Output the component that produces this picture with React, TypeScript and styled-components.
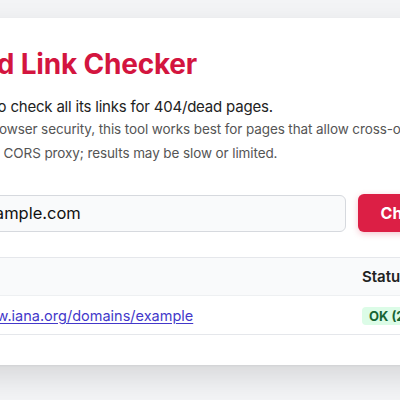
import styled, { createGlobalStyle } from 'styled-components';

const GlobalStyle = createGlobalStyle`
  html, body {
    margin: 0;
    padding: 0;
    background: #f3f4f6;
    font-family: Inter, "Noto Sans", "Liberation Sans", sans-serif;
  }
`;

const Page = styled.div`
  height: 400px;
  overflow: hidden;
  padding-top: 18px;
  box-sizing: border-box;
`;

const Card = styled.div`
  margin-left: -124px;
  width: 900px;
  background: #ffffff;
  border-radius: 12px;
  box-shadow: 0 12px 30px rgba(0, 0, 0, 0.12), 0 1px 3px rgba(0, 0, 0, 0.05);
  padding: 30px 32px 30px;
  box-sizing: border-box;
`;

const Title = styled.h1`
  display: flex;
  align-items: center;
  gap: 8px;
  margin: 0 0 14px;
  font-size: 28px;
  line-height: 1.2;
  font-weight: 700;
  color: #d3153f;
  letter-spacing: -0.2px;
`;

const Lead = styled.p`
  margin: 0;
  font-size: 15px;
  line-height: 1.5;
  color: #222;
  letter-spacing: -0.2px;
`;

const Note = styled.p`
  margin: 0 0 29px;
  font-size: 13.5px;
  line-height: 1.75;
  color: #555;
  white-space: nowrap;
  letter-spacing: -0.1px;
  text-indent: -6px;

  strong {
    font-weight: 700;
  }
`;

const Form = styled.div`
  display: flex;
  align-items: center;
  gap: 12px;
  width: 591px;
`;

const UrlInput = styled.input`
  flex: 1;
  height: 37px;
  box-sizing: border-box;
  padding: 0 12px;
  font-family: inherit;
  font-size: 16.5px;
  color: #111;
  background: #f9fafb;
  border: 1px solid #d6d9de;
  border-radius: 6px;
  outline: none;
`;

const Button = styled.button`
  height: 38px;
  padding: 0 23px;
  font-family: inherit;
  font-size: 16px;
  font-weight: 700;
  color: #fff;
  background: #dc1f45;
  border: none;
  border-radius: 6px;
  box-shadow: 0 2px 6px rgba(220, 31, 69, 0.25);
  white-space: nowrap;
`;

const Table = styled.table`
  margin-top: 25px;
  width: 100%;
  table-layout: fixed;
  border-collapse: collapse;
  font-size: 15px;
`;

const HeadCell = styled.th<{ w?: number }>`
  text-align: left;
  font-weight: 600;
  color: #222;
  background: #f9fafb;
  height: 38px;
  padding: 0 16px;
  width: ${({ w }) => (w ? `${w}px` : 'auto')};
  box-sizing: border-box;
  border-top: 1px solid #e5e7eb;
  border-bottom: 1px solid #eef0f2;
`;

const Cell = styled.td`
  height: 38px;
  padding: 0 16px;
  border-bottom: 1px solid #e5e7eb;
  white-space: nowrap;
`;

const LinkText = styled.a`
  color: #4338ca;
  font-size: 14.5px;
  text-decoration: underline;
  text-underline-offset: 2px;
`;

const Badge = styled.span<{ tone: 'ok' | 'bad' }>`
  display: inline-block;
  padding: 1px 7px;
  border-radius: 4px;
  font-size: 13px;
  font-weight: 700;
  background: ${({ tone }) => (tone === 'ok' ? '#dcfce7' : '#fee2e2')};
  color: ${({ tone }) => (tone === 'ok' ? '#166534' : '#991b1b')};
`;

const LinkIcon = () => (
  <svg width="28" height="28" viewBox="0 0 24 24" fill="none" stroke="currentColor" strokeWidth="2.2" strokeLinecap="round" strokeLinejoin="round">
    <path d="M10 13a5 5 0 0 0 7.54.54l3-3a5 5 0 0 0-7.07-7.07l-1.72 1.71" />
    <path d="M14 11a5 5 0 0 0-7.54-.54l-3 3a5 5 0 0 0 7.07 7.07l1.71-1.71" />
  </svg>
);

const rows = [{ url: 'https://www.iana.org/domains/example', status: 'OK (200)', ok: true }];

export default function App() {
  return (
    <>
      <GlobalStyle />
      <Page>
        <Card>
          <Title>
            <LinkIcon />
            Dead Link Checker
          </Title>
          <Lead>Enter a URL to check all its links for 404/dead pages.</Lead>
          <Note>
            <strong>Note:</strong> Due to browser security, this tool works best for pages that allow cross-origin requests.
            <br />
            If not, it uses a CORS proxy; results may be slow or limited.
          </Note>
          <Form>
            <UrlInput defaultValue="https://example.com" />
            <Button>Check Links</Button>
          </Form>
          <Table>
            <thead>
              <tr>
                <HeadCell w={438}>Link</HeadCell>
                <HeadCell>Status</HeadCell>
              </tr>
            </thead>
            <tbody>
              {rows.map((r) => (
                <tr key={r.url}>
                  <Cell>
                    <LinkText href={r.url}>{r.url}</LinkText>
                  </Cell>
                  <Cell>
                    <Badge tone={r.ok ? 'ok' : 'bad'}>{r.status}</Badge>
                  </Cell>
                </tr>
              ))}
            </tbody>
          </Table>
        </Card>
      </Page>
    </>
  );
}
